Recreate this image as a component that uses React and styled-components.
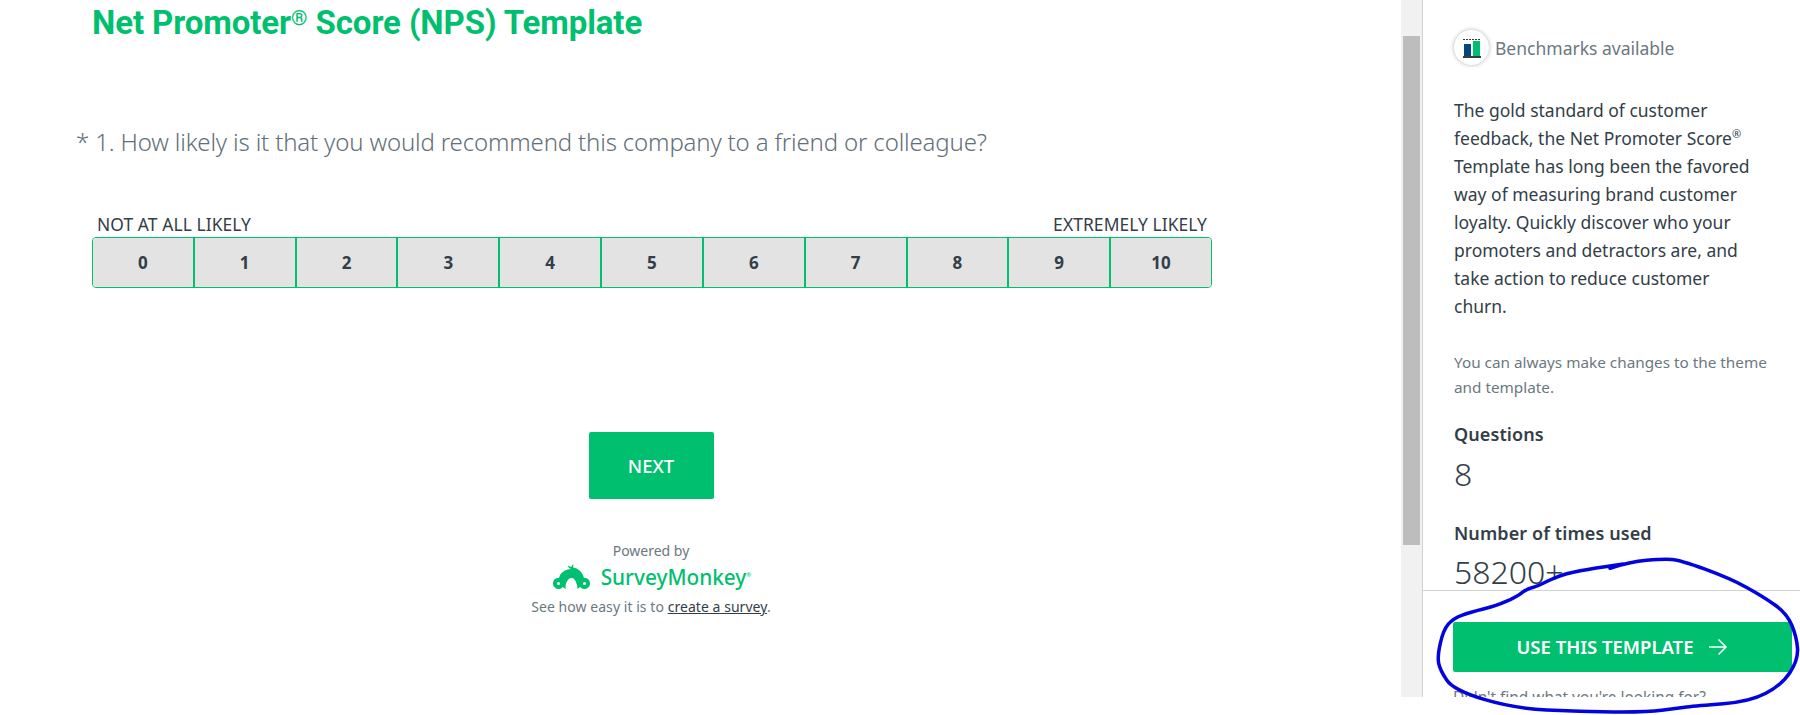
import React from "react";
import styled, { createGlobalStyle } from "styled-components";

const Global = createGlobalStyle`
  html, body { margin: 0; padding: 0; background: #fff; }
  body { font-family: "Noto Sans", "Liberation Sans", sans-serif; color: #333e48; }
`;
const Page = styled.div`
  position: relative;
  width: 1800px;
  height: 715px;
  overflow: hidden;
  background: #fff;
`;
const Viewport = styled.div`
  display: flex;
  height: 697px;
`;
const Main = styled.main`
  width: 1401px;
  padding-left: 92px;
  box-sizing: border-box;
`;
const Content = styled.div`
  width: 1120px;
`;
const Title = styled.h1`
  margin: 0;
  height: 46px;
  font: 700 33px/46px "Roboto", sans-serif;
  letter-spacing: -0.1px;
  color: #00bf6f;
  sup { font-size: 21px; line-height: 0; vertical-align: 9px; }
`;
const Question = styled.h2`
  margin: 80px 0 0 -16px;
  font: 300 24px/32px "Noto Sans", sans-serif;
  letter-spacing: -0.16px;
  color: #636f77;
`;
const ScaleLabels = styled.div`
  display: flex;
  justify-content: space-between;
  margin-top: 56px;
  padding: 0 5px;
  font: 400 17.4px/20px "Noto Sans", sans-serif;
  letter-spacing: 0.1px;
  color: #333e48;
`;
const Scale = styled.div`
  display: flex;
  margin-top: 3px;
  height: 51px;
  box-sizing: border-box;
  border: 1px solid #00bf6f;
  border-radius: 4px;
  overflow: hidden;
`;
const ScaleCell = styled.div`
  flex: 1 1 0;
  box-sizing: border-box;
  display: flex;
  align-items: center;
  justify-content: center;
  background: #e3e3e3;
  font: 700 17px/20px "Noto Sans", sans-serif;
  color: #333e48;
  border-right: 2px solid #00bf6f;
  &:last-child { border-right: 0; }
`;
const Actions = styled.div`
  display: flex;
  flex-direction: column;
  align-items: center;
  padding-right: 2px;
`;
const NextButton = styled.button`
  margin-top: 144px;
  width: 125px;
  height: 67px;
  border: 0;
  border-radius: 2px;
  background: #00bf6f;
  color: #fff;
  font: 500 18.5px/20px "Noto Sans", sans-serif;
`;
const Powered = styled.div`
  margin-top: 42px;
  font: 400 14px/20px "Noto Sans", sans-serif;
  color: #6b787f;
`;
const Logo = styled.div`
  display: flex;
  align-items: center;
  gap: 11px;
  height: 30px;
  margin-top: 1px;
  margin-bottom: -1px;
  padding-left: 2px;
`;
const LogoText = styled.span`
  font: 500 20.8px/30px "Noto Sans", sans-serif;
  color: #00bf6f;
  sup { font-size: 6px; vertical-align: 8px; line-height: 0; }
`;
const Create = styled.div`
  margin-top: 6px;
  font: 400 14px/20px "Noto Sans", sans-serif;
  letter-spacing: 0.05px;
  color: #6b787f;
  a { color: #333e48; text-decoration: underline; }
`;
const Track = styled.div`
  width: 21px;
  padding: 36px 2px 0;
  box-sizing: border-box;
  background: #f1f1f1;
`;
const Thumb = styled.div`
  height: 509px;
  background: #bdbdbd;
`;
const Side = styled.aside`
  width: 378px;
  box-sizing: border-box;
  border-left: 1px solid #d0d2d3;
  display: flex;
  flex-direction: column;
`;
const SideScroll = styled.div`
  height: 590px;
  overflow: hidden;
  padding: 30px 8px 0 31px;
  box-sizing: border-box;
`;
const Bench = styled.div`
  display: flex;
  align-items: center;
  gap: 6px;
  font: 400 17.5px/34px "Noto Sans", sans-serif;
  color: #6b787f;
`;
const Badge = styled.div`
  width: 35px;
  height: 35px;
  border-radius: 50%;
  background: #fff;
  box-shadow: 0 0 4px rgba(0, 0, 0, 0.3);
  display: flex;
  align-items: center;
  justify-content: center;
`;
const Description = styled.p`
  margin: 31px 0 0;
  width: 310px;
  font: 400 17.5px/28px "Noto Sans", sans-serif;
  color: #333e48;
  sup { font-size: 11px; line-height: 0; }
`;
const Note = styled.p`
  margin: 30px 0 0;
  width: 320px;
  font: 400 15.3px/25px "Noto Sans", sans-serif;
  color: #6b787f;
`;
const StatLabel = styled.div`
  margin-top: ${(p) => p.$top}px;
  font: 600 18px/24px "Noto Sans", sans-serif;
  letter-spacing: 0.1px;
  color: #333e48;
`;
const StatValue = styled.div`
  margin-top: ${(p) => p.$top}px;
  font: 300 32px/36px "Noto Sans", sans-serif;
  color: #333e48;
`;
const SideFooter = styled.div`
  flex: 1;
  overflow: hidden;
  border-top: 1px solid #d0d2d3;
  padding: 31px 8px 0 30px;
`;
const UseButton = styled.button`
  width: 339px;
  height: 50px;
  border: 0;
  border-radius: 2px;
  background: #00bf6f;
  color: #fff;
  display: flex;
  align-items: center;
  justify-content: center;
  gap: 15px;
  font: 600 18.5px/20px "Noto Sans", sans-serif;
`;
const Hint = styled.div`
  margin-top: 16px;
  font: 400 15.4px/20px "Noto Sans", sans-serif;
  color: #6b787f;
`;
const Ink = styled.svg`
  position: absolute;
  left: 0;
  top: 0;
  pointer-events: none;
`;

const inkPoints = [
  [690,625],[750,605],[850,597],[900,600],[1050,655],[1150,710],[1220,760],[1250,830],[1255,900],[1205,975],
  [1110,1025],[950,1037],[890,1045],[800,1057],[600,1055],[400,1045],[220,990],[180,930],[172,890],[190,810],
  [220,775],[270,757],[350,737],[410,710],[440,687],[470,680],[540,645],[620,628],[730,612],
].map(([x, y]) => [1380 + x / 3, 360 + y / 3]);

const inkPath = inkPoints.reduce((d, p, i) => {
  if (i === 0) return `M${p[0].toFixed(1)} ${p[1].toFixed(1)}`;
  const next = inkPoints[i + 1] || p;
  const mx = (p[0] + next[0]) / 2;
  const my = (p[1] + next[1]) / 2;
  return `${d} Q${p[0].toFixed(1)} ${p[1].toFixed(1)} ${mx.toFixed(1)} ${my.toFixed(1)}`;
}, "");

const values = [0, 1, 2, 3, 4, 5, 6, 7, 8, 9, 10];

function MonkeyLogo() {
  return (
    <svg width="37" height="27" viewBox="0 0 37 27" aria-hidden="true">
      <path fill="#00bf6f" d="M18.5 5c-2-.2-3-1.500-4-3.500 1.500.5 2.500 1 3.500 1.500.5-1 1.500-2 2.500-3-.2 1.500-.4 2.500-.4 3.500C26 4.500 30 9 31 14c3.500-.5 6 2 6 5.500S34 25 31 25c-1.500 0-3-.8-3.700-2-1 .8-2 1.500-3.300 2 .5-1.500.5-2.500 0-4-1-3.500-2.500-7-5.500-7s-5 3.500-5.800 7c-.3 1.500-.3 2.500.3 4-1.400-.5-2.400-1.200-3.300-2-.7 1.200-2.200 2-3.700 2-3 0-6-2-6-5.500S2.500 13.500 6 14C7 9 12 5 18.500 5z" />
      <circle cx="5.5" cy="19.5" r="1.5" fill="#fff" />
      <circle cx="31.5" cy="19.5" r="1.5" fill="#fff" />
    </svg>
  );
}

function BenchIcon() {
  return (
    <svg width="20" height="20" viewBox="0 0 20 20" aria-hidden="true">
      <path d="M1 1.500H19" stroke="#333e48" strokeWidth="1" strokeDasharray="2 1" />
      <rect x="2" y="6" width="7" height="12" fill="#05467e" />
      <rect x="11" y="3" width="7" height="15" fill="#00bf6f" />
      <rect x="1" y="18" width="18" height="2" fill="#333e48" />
    </svg>
  );
}

export default function App() {
  return (
    <Page>
      <Global />
      <Viewport>
        <Main>
          <Content>
            <Title>Net Promoter<sup>®</sup> Score (NPS) Template</Title>
            <Question>* 1. How likely is it that you would recommend this company to a friend or colleague?</Question>
            <ScaleLabels>
              <span>NOT AT ALL LIKELY</span>
              <span>EXTREMELY LIKELY</span>
            </ScaleLabels>
            <Scale>
              {values.map((v) => (
                <ScaleCell key={v}>{v}</ScaleCell>
              ))}
            </Scale>
            <Actions>
              <NextButton>NEXT</NextButton>
              <Powered>Powered by</Powered>
              <Logo>
                <MonkeyLogo />
                <LogoText>SurveyMonkey<sup>®</sup></LogoText>
              </Logo>
              <Create>
                See how easy it is to <a>create a survey</a>.
              </Create>
            </Actions>
          </Content>
        </Main>
        <Track>
          <Thumb />
        </Track>
        <Side>
          <SideScroll>
            <Bench>
              <Badge>
                <BenchIcon />
              </Badge>
              Benchmarks available
            </Bench>
            <Description>
              The gold standard of customer feedback, the Net Promoter Score<sup>®</sup> Template has long been the favored way of measuring brand customer loyalty. Quickly discover who your promoters and detractors are, and take action to reduce customer churn.
            </Description>
            <Note>You can always make changes to the theme and template.</Note>
            <StatLabel $top={22}>Questions</StatLabel>
            <StatValue $top={10}>8</StatValue>
            <StatLabel $top={29}>Number of times used</StatLabel>
            <StatValue $top={9}>58200+</StatValue>
          </SideScroll>
          <SideFooter>
            <UseButton>
              USE THIS TEMPLATE
              <svg width="20" height="18" viewBox="0 0 20 18" fill="none" stroke="#fff" strokeWidth="1.5" aria-hidden="true">
                <path d="M1 9H18M10.500 1.500L18 9L10.500 16.500" />
              </svg>
            </UseButton>
            <Hint>Didn't find what you're looking for?</Hint>
          </SideFooter>
        </Side>
      </Viewport>
      <Ink width="1800" height="715" viewBox="0 0 1800 715" aria-hidden="true">
        <path d={inkPath} fill="none" stroke="#0303df" strokeWidth="3.5" strokeLinejoin="round" strokeLinecap="round" />
      </Ink>
    </Page>
  );
}
